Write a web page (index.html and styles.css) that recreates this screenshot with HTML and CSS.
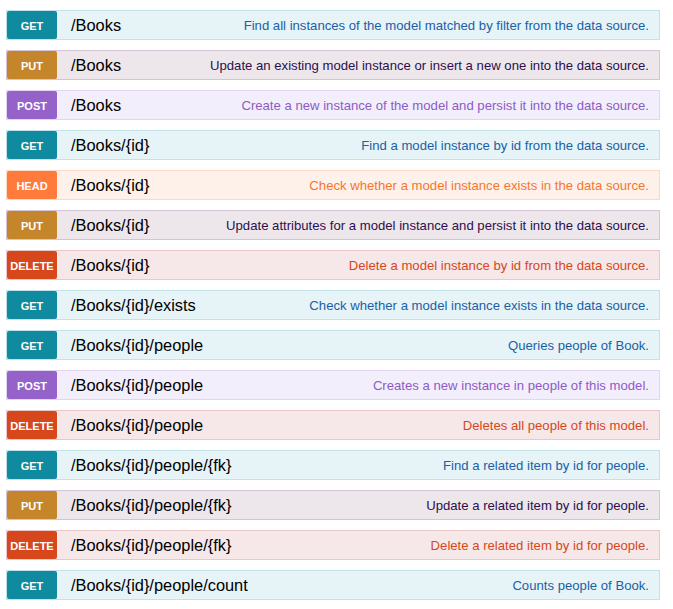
FILE: index.html
```html
<!DOCTYPE html>
<html>
<head>
<meta charset="utf-8">
<link rel="stylesheet" href="styles.css">
</head>
<body>
<div class="list">
  <div class="op get"><span class="verb">GET</span><span class="path">/Books</span><span class="desc">Find all instances of the model matched by filter from the data source.</span></div>
  <div class="op put"><span class="verb">PUT</span><span class="path">/Books</span><span class="desc">Update an existing model instance or insert a new one into the data source.</span></div>
  <div class="op post"><span class="verb">POST</span><span class="path">/Books</span><span class="desc">Create a new instance of the model and persist it into the data source.</span></div>
  <div class="op get"><span class="verb">GET</span><span class="path">/Books/{id}</span><span class="desc">Find a model instance by id from the data source.</span></div>
  <div class="op head"><span class="verb">HEAD</span><span class="path">/Books/{id}</span><span class="desc">Check whether a model instance exists in the data source.</span></div>
  <div class="op put"><span class="verb">PUT</span><span class="path">/Books/{id}</span><span class="desc">Update attributes for a model instance and persist it into the data source.</span></div>
  <div class="op delete"><span class="verb">DELETE</span><span class="path">/Books/{id}</span><span class="desc">Delete a model instance by id from the data source.</span></div>
  <div class="op get"><span class="verb">GET</span><span class="path">/Books/{id}/exists</span><span class="desc">Check whether a model instance exists in the data source.</span></div>
  <div class="op get"><span class="verb">GET</span><span class="path">/Books/{id}/people</span><span class="desc">Queries people of Book.</span></div>
  <div class="op post"><span class="verb">POST</span><span class="path">/Books/{id}/people</span><span class="desc">Creates a new instance in people of this model.</span></div>
  <div class="op delete"><span class="verb">DELETE</span><span class="path">/Books/{id}/people</span><span class="desc">Deletes all people of this model.</span></div>
  <div class="op get"><span class="verb">GET</span><span class="path">/Books/{id}/people/{fk}</span><span class="desc">Find a related item by id for people.</span></div>
  <div class="op put"><span class="verb">PUT</span><span class="path">/Books/{id}/people/{fk}</span><span class="desc">Update a related item by id for people.</span></div>
  <div class="op delete"><span class="verb">DELETE</span><span class="path">/Books/{id}/people/{fk}</span><span class="desc">Delete a related item by id for people.</span></div>
  <div class="op get"><span class="verb">GET</span><span class="path">/Books/{id}/people/count</span><span class="desc">Counts people of Book.</span></div>
</div>
</body>
</html>
```

FILE: styles.css
```css
html, body {
  margin: 0;
  padding: 0;
  background: #ffffff;
}
body {
  font-family: "Liberation Sans", Arial, sans-serif;
}
.list {
  display: flex;
  flex-direction: column;
  gap: 10px;
  padding: 10px 13px 0 6px;
}
.op {
  display: flex;
  align-items: center;
  height: 30px;
  box-sizing: border-box;
  border: 1px solid;
}
.verb {
  width: 50px;
  height: 28px;
  display: flex;
  align-items: center;
  justify-content: center;
  border-radius: 2px;
  color: #fff;
  font-weight: bold;
  font-size: 11px;
  padding-top: 1px;
  box-sizing: border-box;
  flex: none;
}
.path {
  margin-left: 14px;
  font-size: 16.4px;
  color: #000;
  flex: none;
  padding-top: 1px;
}
.desc {
  margin-left: auto;
  padding-right: 10px;
  font-size: 13.15px;
}
.get { background: #e6f3f7; border-color: #c2e2ea; }
.get .verb { background: #0f8a9e; }
.get .desc { color: #1b5fa8; }
.put { background: #ede7ec; border-color: #d5c3d8; }
.put .verb { background: #c5862b; }
.put .desc { color: #2c0f4f; }
.post { background: #f3eefb; border-color: #e2d5f2; }
.post .verb { background: #9462c9; }
.post .desc { color: #8c5cc6; }
.head { background: #fdf1ea; border-color: #fbd9c6; }
.head .verb { background: #ff7a3b; }
.head .desc { color: #f8752f; }
.delete { background: #f6e8e8; border-color: #ebc7c8; }
.delete .verb { background: #d6471b; }
.delete .desc { color: #d6471b; }
```
